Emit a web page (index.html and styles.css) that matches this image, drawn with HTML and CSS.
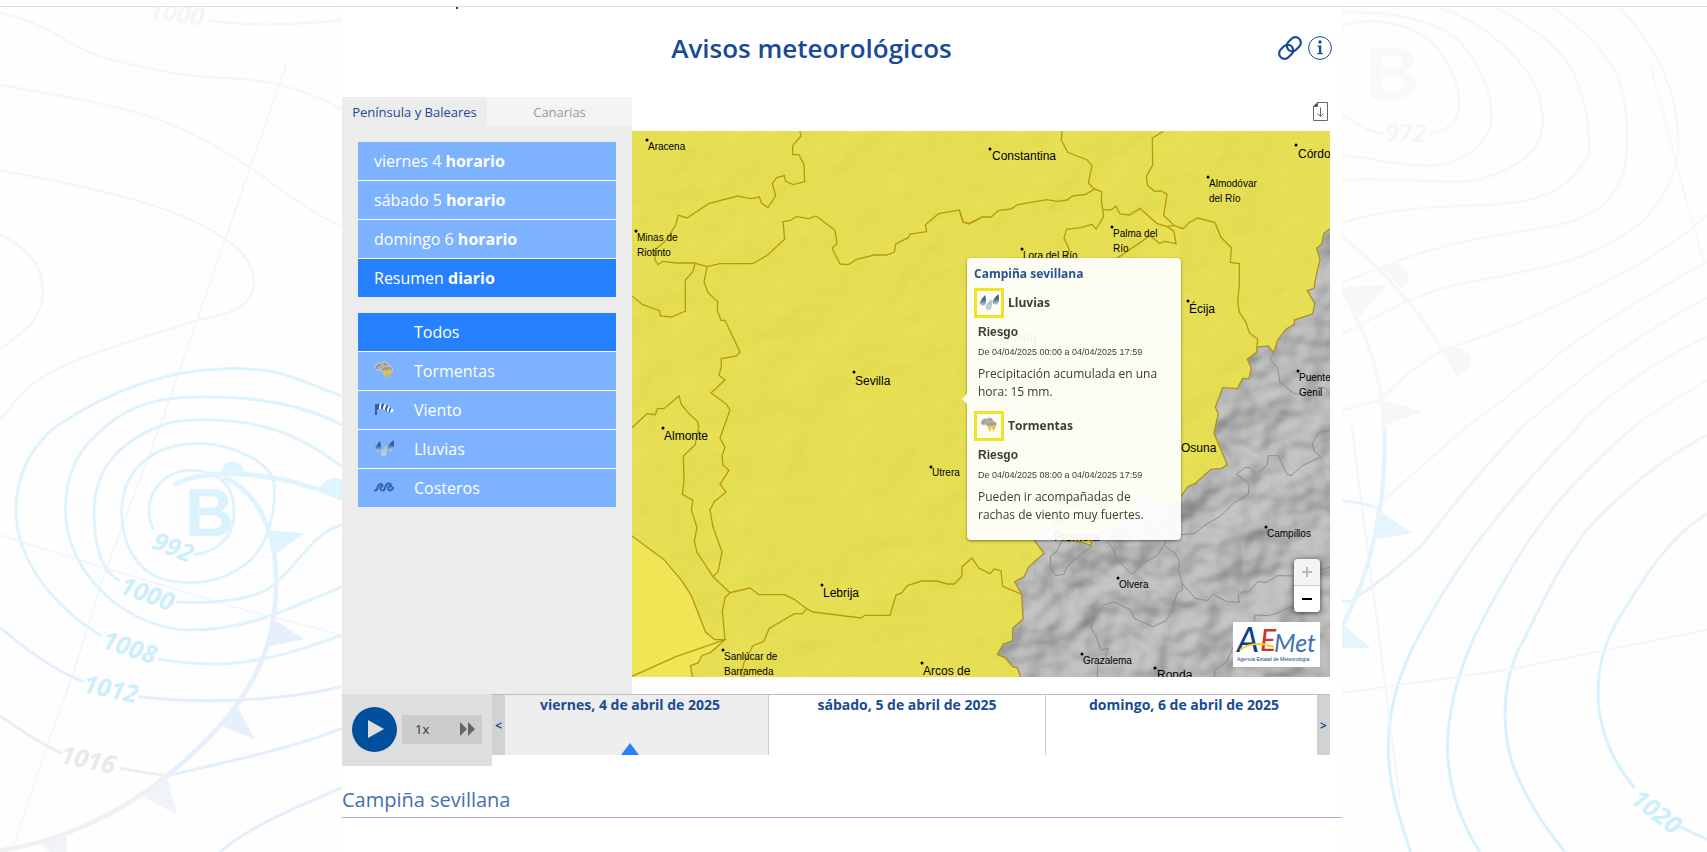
FILE: index.html
```html
<!DOCTYPE html>
<html lang="es">
<head>
    <meta charset="UTF-8">
    <meta name="viewport" content="width=device-width, initial-scale=1.0">
    <title>Avisos meteorológicos</title>
    <link rel="stylesheet" href="styles.css">
</head>
<body>
    <!-- isobaras del fondo -->
    <svg class="fondo fondo-izq" viewBox="0 0 1026 2556" aria-hidden="true">
        <g fill="none" stroke="#f6f6f6" stroke-width="7">
            <path d="M0 38C160 75 220 150 320 175S520 225 640 232S860 240 1026 328"/>
            <path d="M0 255C200 290 380 320 500 368S700 470 760 510S900 620 1026 680"/>
            <path d="M630 62C760 80 900 74 1026 60"/>
        </g>
        <g fill="none" stroke="#f1f5fd" stroke-width="7">
            <path d="M0 512C200 545 420 600 500 630S760 735 762 840S640 945 590 962S350 1030 220 1085S60 1180 0 1262"/>
            <path d="M0 703C80 745 130 790 128 880S60 1000 0 1048"/>
            <path d="M860 190L480 1278L310 1730L220 2020L140 2240L40 2540" stroke-width="5"/>
            <path d="M0 1605L300 1700L700 1820L1026 1905" stroke-width="5"/>
        </g>
        <g fill="none" stroke="#dff3fd" stroke-width="9">
            <path d="M170 1278C330 1170 500 1110 680 1106S900 1145 1026 1188"/>
            <path d="M170 1278C90 1340 48 1430 48 1530C48 1680 160 1820 305 1908M475 1978C640 2005 780 2000 1026 1905"/>
            <path d="M318 1278C230 1350 198 1420 196 1530C200 1740 400 1890 570 1890C740 1890 860 1830 1026 1760"/>
            <path d="M318 1278C400 1210 480 1190 620 1190S900 1210 1026 1275"/>
            <path d="M480 1278C540 1250 700 1255 790 1280C880 1300 960 1350 1026 1400"/>
            <path d="M480 1278C350 1330 282 1410 282 1540C284 1650 310 1720 360 1742M530 1806C640 1812 740 1800 800 1770C900 1700 930 1600 1026 1575"/>
            <path d="M740 1690C650 1760 550 1755 480 1735C400 1700 368 1630 365 1540C365 1390 480 1330 600 1330C720 1335 820 1400 822 1450Q828 1520 808 1578Q790 1650 740 1690"/>
            <path d="M460 1590C420 1500 480 1412 570 1410C650 1412 705 1450 702 1540C700 1620 640 1660 580 1664"/>
        </g>
        <g fill="none" stroke="#e4effd" stroke-width="9">
            <path d="M0 1882C80 1950 160 2010 250 2045M415 2090C600 2110 800 2110 1026 2060"/>
            <path d="M500 2328C680 2285 860 2250 1026 2185"/>
            <path d="M660 2556C760 2470 900 2420 1026 2362"/>
        </g>
        <path fill="none" stroke="#eeeeee" stroke-width="9" d="M0 2148C60 2190 120 2230 185 2260M360 2305L500 2328"/>
        <!-- frentes -->
        <path fill="none" stroke="#def4fe" stroke-width="14" d="M522 1455C600 1410 800 1400 1026 1495M670 1430C780 1480 830 1600 828 1750"/>
        <path fill="none" stroke="#e6effd" stroke-width="14" d="M828 1750C830 1980 720 2150 500 2328"/>
        <path fill="none" stroke="#f0f0f0" stroke-width="14" d="M500 2328C360 2440 200 2520 0 2552"/>
        <g fill="#def4fe">
            <path d="M662 1422A36 36 0 0 1 735 1422Z"/>
            <path d="M955 1465Q990 1420 1026 1440V1500Z"/>
            <path d="M800 1590L915 1600L822 1665Z"/>
        </g>
        <path fill="#e6effd" d="M822 1858L912 1918L800 1940ZM712 2120L765 2218L660 2175Z"/>
        <path fill="#f0f3f8" d="M500 2328L532 2445L430 2390ZM200 2508V2556H150L120 2532Z"/>
        <text class="borrasca" x="555" y="1608">B</text>
        <g class="cifras">
            <text class="celeste" transform="translate(452 1643) rotate(22)">992</text>
            <text class="celeste" transform="translate(355 1778) rotate(20)">1000</text>
            <text class="celeste" transform="translate(302 1942) rotate(18)">1008</text>
            <text class="celeste" transform="translate(246 2076) rotate(12)">1012</text>
            <text class="gris" transform="translate(178 2288) rotate(12)">1016</text>
            <text class="claro" transform="translate(445 55) rotate(8)">1000</text>
        </g>
    </svg>
    <svg class="fondo fondo-der" viewBox="0 0 1101 2556" aria-hidden="true">
        <g fill="none" stroke="#f7f7f7" stroke-width="8">
            <path d="M0 78C120 45 210 75 280 130C340 200 370 290 352 345C335 385 300 395 265 402M130 400C80 395 30 360 0 335"/>
            <path d="M0 38C160 30 270 60 350 115C430 200 465 300 452 380C400 490 300 500 250 497C160 495 100 475 0 463"/>
            <path d="M300 25C420 60 500 140 560 210C620 300 620 400 580 450C500 530 400 550 300 545C200 540 100 535 0 540"/>
            <path d="M470 25C620 100 690 180 710 240C750 350 750 420 745 465C680 590 560 610 440 615C280 620 140 625 0 670"/>
            <path d="M640 25C740 90 800 170 830 220C870 330 865 450 850 520C810 640 700 670 600 685C400 715 250 750 170 785L0 850"/>
            <path d="M840 25C960 150 1015 290 1015 420C1015 530 970 600 900 670C760 780 620 800 480 830C350 850 280 870 200 905L0 1005"/>
            <path d="M1101 645C980 760 760 870 640 920C520 980 430 1010 310 1050C220 1100 170 1150 120 1200L0 1232"/>
            <path d="M1101 785C900 900 760 980 660 1060C560 1150 450 1230 380 1280L120 1510"/>
            <path d="M1101 893C900 1000 760 1100 550 1278"/>
            <path d="M1101 1010C950 1080 820 1170 710 1278"/>
            <path d="M1101 1140C1040 1180 960 1220 885 1278"/>
            <path d="M930 190L1030 570L1090 780" stroke-width="5"/>
        </g>
        <g fill="none" stroke="url(#isobara)" stroke-width="9">
            <path d="M550 1278C440 1390 350 1500 250 1630C180 1700 100 1760 30 1805"/>
            <path d="M718 1278C560 1440 430 1590 340 1730C220 1920 145 2060 145 2240C145 2360 180 2460 212 2556"/>
            <path d="M885 1278C720 1420 600 1550 500 1730C380 1930 325 2080 322 2240C325 2380 370 2480 420 2556"/>
            <path d="M1101 1305C960 1380 840 1480 740 1590C640 1720 590 1850 530 1960C480 2080 490 2210 520 2300C560 2400 620 2490 675 2556"/>
            <path d="M1101 1540C980 1620 920 1720 840 1850C790 1930 770 2010 775 2110C785 2220 830 2300 885 2365M1020 2480L1101 2518"/>
        </g>
        <path fill="none" stroke="#f1f6f9" stroke-width="6" d="M0 2080L500 2010L1101 1890M35 1278L100 1780L180 2400"/>
        <path fill="none" stroke="#f7f7f7" stroke-width="12" d="M0 705C150 820 260 960 355 1125M0 860C90 1010 130 1150 133 1290"/>
        <path fill="none" stroke="#e4f4fd" stroke-width="13" d="M133 1290C140 1520 90 1730 0 1890"/>
        <path fill="none" stroke="#e4f4fd" stroke-width="9" d="M0 1502Q60 1505 118 1525M0 1800L40 1808"/>
        <path fill="#f7f7f7" d="M125 800C160 780 215 790 205 850L185 865ZM0 862L140 855L60 950ZM312 1040C360 1030 410 1060 390 1105L355 1128ZM125 1198L248 1236L125 1278Z"/>
        <path fill="#e6f4fd" d="M110 1528L216 1600L100 1618ZM0 1865L92 1945H0Z"/>
        <text class="borrasca tenue" x="78" y="296">B</text>
        <g class="cifras">
            <text class="claro" x="135" y="425">972</text>
            <text class="celeste" transform="translate(868 2405) rotate(38)">1020</text>
        </g>
        <defs>
            <linearGradient id="isobara" gradientUnits="userSpaceOnUse" x1="0" y1="1278" x2="0" y2="2100">
                <stop offset="0" stop-color="#f4f4f6"/>
                <stop offset="1" stop-color="#d6f2fd"/>
            </linearGradient>
        </defs>
    </svg>

    <div class="contenedor">
        <header class="cabecera">
            <h1>Avisos meteorológicos</h1>
            <a href="#enlace" class="icono-cab" aria-label="Enlace">
                <svg width="24" height="24" viewBox="1 1 22 22" fill="none" stroke="#1a4a94" stroke-width="2" stroke-linecap="round">
                    <path d="M10 13a5 5 0 0 0 7.540.540l3-3a5 5 0 0 0-7.070-7.070l-3.200 3.200Q8 9 10 13"/>
                    <path d="M14 11a5 5 0 0 0-7.540-.540l-3 3a5 5 0 0 0 7.070 7.070l3.200-3.200Q16 15 14 11"/>
                </svg>
            </a>
            <a href="#info" class="icono-cab" aria-label="Información">
                <svg width="24" height="24" viewBox="0 0 24 24">
                    <circle cx="12" cy="12" r="11.400" fill="#fff" stroke="#1a4a94"/>
                    <circle cx="12" cy="6" r="1.700" fill="#1a4a94"/>
                    <path d="M9.500 9.500H13.300V17H14.800V18.200H9.400V17H10.900V10.700H9.500Z" fill="#1a4a94"/>
                </svg>
            </a>
        </header>

        <div class="visor">
            <div class="superior">
                <aside class="lateral">
                    <div class="pestanas">
                        <button type="button" class="pestana activa">Península y Baleares</button>
                        <button type="button" class="pestana">Canarias</button>
                    </div>
                    <ul class="menu">
                        <li><a href="#d4">viernes 4 <b>horario</b></a></li>
                        <li><a href="#d5">sábado 5 <b>horario</b></a></li>
                        <li><a href="#d6">domingo 6 <b>horario</b></a></li>
                        <li><a href="#resumen" class="activo">Resumen <b>diario</b></a></li>
                    </ul>
                    <ul class="menu fenomenos">
                        <li><a href="#todos" class="activo"><span class="icono"></span>Todos</a></li>
                        <li><a href="#tormentas"><span class="icono"><svg width="20" height="20" viewBox="0 0 20 20"><use href="#i-tormenta"/></svg></span>Tormentas</a></li>
                        <li><a href="#viento"><span class="icono"><svg width="20" height="20" viewBox="0 0 20 20">
                            <path d="M1 4H3V15H1Z" fill="#2d5fae"/>
                            <path d="M3 4.500L6 3.500L12 4.500L18.500 8.500A2.200 2.200 0 0 1 17 12.500L13 11.500L8 8.500L3 9Z" fill="#fff"/>
                            <path d="M3 4L6 3.500Q4.800 6 5 9L3 9.500ZM8 3.500L10.500 4Q8.800 6.500 9 9.500L7 8.500Q6.500 6 8 3.500ZM12.500 4.800L14.500 6Q12.800 8.500 13 11.500L11 10.500Q11 7.500 12.500 4.800ZM16 7L17.500 8Q16.200 10 16 12.500L14.500 12Q14.700 9 16 7Z" fill="#2d5fae"/>
                        </svg></span>Viento</a></li>
                        <li><a href="#lluvias"><span class="icono"><svg width="20" height="20" viewBox="0 0 20 20"><use href="#i-lluvia"/></svg></span>Lluvias</a></li>
                        <li><a href="#costeros"><span class="icono"><svg width="20" height="20" viewBox="0 0 20 20" fill="none" stroke="#2f66b4" stroke-width="2" stroke-linecap="round" stroke-linejoin="round">
                            <path d="M1 12.500Q3 12.500 3.500 10Q4 6 7 6Q9 6.500 8.500 8.500Q7 7.800 6.300 9.500Q6.200 12.500 8.500 12.500Q10.500 12.500 11 10Q12 5.500 15 5.500Q17.500 6 17 8.500Q15 7.500 14.300 9.500Q14 12.500 16 12.500Q18.500 12 19 9.500"/>
                        </svg></span>Costeros</a></li>
                    </ul>
                </aside>

                <section class="zona-mapa">
                    <div class="barra-mapa">
                        <a href="#descarga" aria-label="Descargar mapa">
                            <svg width="15" height="19" viewBox="0 0 15 19" fill="none" stroke="#666">
                                <path d="M4.500 .500H14.500V18.500H.500V4.500Z"/>
                                <path d="M.500 4.500L4.500 .500V4.500Z" fill="#4a4a4a"/>
                                <path d="M7.500 5.500V14M4.500 11.500L7.500 14.500L10.500 11.500"/>
                            </svg>
                        </a>
                    </div>
                    <div class="mapa">
                        <svg class="capa" viewBox="0 0 2094 1638" preserveAspectRatio="xMinYMin slice" aria-hidden="true">
                            <defs>
                                <filter id="relieve" x="0" y="0" width="1" height="1" color-interpolation-filters="sRGB">
                                    <feTurbulence type="fractalNoise" baseFrequency=".006 .007" numOctaves="3" seed="8"/>
                                    <feDiffuseLighting surfaceScale="32" lighting-color="#d2d2d2">
                                        <feDistantLight azimuth="225" elevation="62"/>
                                    </feDiffuseLighting>
                                </filter>
                            </defs>
                            <rect width="2094" height="1638" fill="#b7b7b7"/>
                            <rect width="2094" height="1638" filter="url(#relieve)" opacity=".55"/>
                            <!-- límites en zona sin aviso -->
                            <g class="limites-gris" transform="translate(984 -33)">
                                <path d="M942 698L930 717L953 745L960 788L1003 821L1030 823L1045 805L1060 818L1075 802L1095 803L1110 822"/>
                                <path d="M1110 933L1078 937L1057 970L1062 993L1083 1011L1027 1037L993 1067L980 1062L955 1007L925 1007L922 1035L886 1066L870 1042L855 1043L829 1062L868 1092L865 1123L820 1150L780 1190L735 1215L704 1240L663 1244"/>
                                <path d="M440 1262L462 1290L470 1315L512 1361L522 1359L545 1332L590 1308L612 1275L625 1245L663 1244"/>
                                <path d="M612 1275L645 1300L658 1322L655 1350L667 1390L706 1435L741 1442L758 1423L800 1445L838 1447L835 1425L850 1415L865 1417L893 1385L920 1387L953 1367L1000 1368L1110 1342"/>
                                <path d="M667 1390L667 1410L650 1420L640 1465L618 1502L580 1520L522 1495L513 1470L462 1446L430 1455L398 1500L394 1525L408 1548L423 1590L445 1585L437 1610L413 1635L412 1671"/>
                                <path d="M397 1276L345 1318L319 1343L313 1363L286 1367L270 1335L272 1308L290 1295L305 1262"/>
                                <path d="M1003 1465L988 1462L950 1480L925 1487L886 1485L882 1505L850 1540L820 1580L800 1625L765 1650L762 1671"/>
                            </g>
                            <!-- zona con aviso amarillo -->
                            <path class="aviso" transform="translate(984 -33)" d="M-990 30H1115V323L1092 340L1085 372L1070 385L1080 418L1070 460L1062 505L1042 512L1064 550L1058 582L1003 600V613L978 628L953 660L942 698L925 678L891 681L890 697L862 718L874 745L867 776L848 775L832 806L788 803L766 862L775 880L762 940L802 1034L786 1045L753 1048L706 1090L683 1100L663 1130L640 1155L585 1165L530 1115L526 1190L470 1220L440 1225L397 1262L391 1276L370 1268L345 1263H315L290 1218L210 1235L222 1260L252 1300L205 1342L193 1370L164 1385L185 1423L189 1497L158 1525V1562L130 1572L112 1603L135 1613L158 1640L172 1643L183 1675H-990Z"/>
                            <path class="mar" transform="translate(-6 -33)" d="M0 1246L102 1319L155 1382L184 1427L227 1537L254 1559H285L242 1597L215 1607L205 1628L181 1638L188 1675H0Z"/>
                            <g class="limites" transform="translate(-6 -33)">
                                <path d="M510 33L513 48L488 77V104H507L522 135L524 185L489 194L467 183L463 167L440 173L427 190L437 228L414 263L395 250L388 231L361 236L323 228L236 251L171 294L145 285L137 315L108 361L75 390V420L84 434L98 424L138 429H193L231 440L270 431H368L410 407L464 358L459 305L482 301L498 290L537 296L558 288L615 331L621 371L606 384L630 432L655 434L680 418L733 405H770L793 396L797 372L835 353L840 342L890 335L886 314L926 281L988 270L999 306L1017 311L1050 295"/>
                                <path d="M195 430L189 454L166 480V573L124 591L91 588L89 572L38 554L6 528"/>
                                <path d="M231 440L222 486L234 518L263 545L262 572L273 601H285L330 696L320 708L274 716V738L267 766L285 780L243 819L288 851L300 870L270 954L285 982L276 1008L279 1035L297 1051L270 1093L288 1116L252 1146L240 1170L249 1221L276 1296L264 1356L249 1370L300 1418L360 1404L387 1424H463L493 1438L530 1466L549 1476L693 1494L704 1486H780L798 1425L815 1419L832 1397L875 1383H920L953 1392H973L996 1368V1340L1026 1314L1047 1345L1080 1361L1093 1347L1113 1352L1118 1399L1175 1423"/>
                                <path d="M6 923L51 881L76 884L82 866H102L147 828L154 853L176 880L202 903L206 922L195 975L160 1008L162 1083L157 1123L189 1141L184 1170L201 1223L193 1263L201 1297L249 1370"/>
                                <path d="M300 1418L285 1433L277 1475L285 1559M530 1466L517 1481H493L417 1526L402 1563L368 1578L342 1628L333 1665L345 1670"/>
                                <path d="M6 1669L138 1610L285 1559M6 1248L102 1319L155 1382L184 1427L227 1537L254 1559H285L242 1597L215 1607L205 1628L181 1638L188 1675"/>
                            </g>
                            <g class="limites" transform="translate(984 -33)">
                                <path d="M0 275L9 306L27 311L67 291H94L114 272L153 267L173 254L261 239L291 244L321 240L337 228L377 223L403 207L385 189L396 137L382 120L323 97L304 60L306 33"/>
                                <path d="M403 207L425 215L424 242L431 290L408 327L396 313L363 323L320 328L312 353L328 390L310 420L350 455L375 475L395 470L410 445L475 412L570 347L598 370L614 364L648 371L642 334L622 320L590 310L540 265L508 285L480 282L468 259L452 270L428 268"/>
                                <path d="M610 34L577 54L578 135L559 170L563 197L584 214L604 213L621 223L611 286L642 316L622 320M642 316L669 326L687 308L713 294L765 308L783 352L814 383L811 427L838 431V495L833 545L838 577L857 605L868 638L893 658L891 681"/>
                            </g>
                        </svg>
                        <svg class="capa poblaciones" viewBox="0 0 698 546" preserveAspectRatio="xMinYMin slice">
                            <g class="puntos">
                                <circle cx="15" cy="9" r="1.500"/><circle cx="4" cy="100" r="1.500"/><circle cx="222" cy="241" r="1.500"/>
                                <circle cx="31" cy="297" r="1.500"/><circle cx="299" cy="336" r="1.500"/><circle cx="190" cy="454" r="1.500"/>
                                <circle cx="91" cy="519" r="1.500"/><circle cx="290" cy="532" r="1.500"/><circle cx="358" cy="18" r="1.500"/>
                                <circle cx="664" cy="14" r="1.500"/><circle cx="576" cy="46" r="1.500"/><circle cx="480" cy="96" r="1.500"/>
                                <circle cx="390" cy="118" r="1.500"/><circle cx="556" cy="170" r="1.500"/><circle cx="666" cy="240" r="1.500"/>
                                <circle cx="547" cy="309" r="1.500"/><circle cx="634" cy="396" r="1.500"/><circle cx="486" cy="447" r="1.500"/>
                                <circle cx="450" cy="523" r="1.500"/><circle cx="523" cy="537" r="1.500"/>
                            </g>
                            <g class="pueblo">
                                <text x="16" y="19">Aracena</text>
                                <text x="5" y="110">Minas de<tspan x="5" dy="15">Riotinto</tspan></text>
                                <text x="300" y="345">Utrera</text>
                                <text x="92" y="529">Sanlúcar de<tspan x="92" dy="15">Barrameda</tspan></text>
                                <text x="577" y="56">Almodóvar<tspan x="577" dy="15">del Río</tspan></text>
                                <text x="481" y="106">Palma del<tspan x="481" dy="15">Río</tspan></text>
                                <text x="391" y="128">Lora del Río</text>
                                <text x="667" y="250">Puente<tspan x="667" dy="15">Genil</tspan></text>
                                <text x="635" y="406">Campillos</text>
                                <text x="487" y="457">Olvera</text>
                                <text x="451" y="533">Grazalema</text>
                            </g>
                            <g class="ciudad">
                                <text x="223" y="254">Sevilla</text>
                                <text x="32" y="309">Almonte</text>
                                <text x="191" y="466">Lebrija</text>
                                <text x="291" y="544">Arcos de</text>
                                <text x="360" y="29">Constantina</text>
                                <text x="666" y="27">Córdoba</text>
                                <text x="557" y="182">Écija</text>
                                <text x="355" y="211">Carmona</text>
                                <text x="549" y="321">Osuna</text>
                                <text x="422" y="374">Morón de<tspan x="422" dy="18">la</tspan><tspan x="422" dy="18">Frontera</tspan></text>
                                <text x="525" y="548">Ronda</text>
                            </g>
                        </svg>

                        <div class="globo">
                            <h2>Campiña sevillana</h2>
                            <article class="aviso-item">
                                <h3><span class="marco"><svg width="20" height="20" viewBox="0 0 20 20"><use href="#i-lluvia"/></svg></span>Lluvias</h3>
                                <p class="nivel">Riesgo</p>
                                <p class="fechas">De 04/04/2025 00:00 a 04/04/2025 17:59</p>
                                <p class="texto">Precipitación acumulada en una hora: 15 mm.</p>
                            </article>
                            <article class="aviso-item">
                                <h3><span class="marco"><svg width="18" height="18" viewBox="0 0 20 20"><use href="#i-tormenta"/></svg></span>Tormentas</h3>
                                <p class="nivel">Riesgo</p>
                                <p class="fechas">De 04/04/2025 08:00 a 04/04/2025 17:59</p>
                                <p class="texto">Pueden ir acompañadas de rachas de viento muy fuertes.</p>
                            </article>
                        </div>

                        <div class="controles">
                            <div class="zoom">
                                <button type="button" aria-label="Acercar" disabled><svg width="10" height="10"><path d="M0 4H4V0H6V4H10V6H6V10H4V6H0Z" fill="#bbb"/></svg></button>
                                <button type="button" aria-label="Alejar"><svg width="10" height="10"><path d="M0 4H10V6H0Z" fill="#000"/></svg></button>
                            </div>
                            <svg class="logo" width="87" height="45" viewBox="0 0 87 45" role="img" aria-label="AEMET">
                                <rect width="87" height="45" fill="#fff"/>
                                <text class="letra" x="4" y="30" font-size="35" fill="#0b3d91">A</text>
                                <text class="letra" x="27" y="29" font-size="30" fill="#c8372d">E</text>
                                <text class="letra" x="41" y="30" font-size="25" fill="#3f72b5">Met</text>
                                <path d="M7 28Q20 18 41 25" fill="none" stroke="#f6d21f" stroke-width="2"/>
                                <text x="4" y="39" class="lema">Agencia Estatal de Meteorología</text>
                            </svg>
                        </div>
                    </div>
                </section>
            </div>

            <div class="reproductor">
                <div class="mandos">
                    <button type="button" class="play" aria-label="Reproducir">
                        <svg width="16" height="18" viewBox="0 0 16 18"><path d="M0 0L16 9L0 18Z" fill="#dfdfdf"/></svg>
                    </button>
                    <button type="button" class="velocidad">1x
                        <svg width="16" height="14" viewBox="0 0 16 14"><path d="M0 0L7 7L0 14ZM8 0L15 7L8 14Z" fill="#666"/></svg>
                    </button>
                </div>
                <div class="linea">
                    <button type="button" class="paso previo" aria-label="Anterior">&lt;</button>
                    <ol class="dias">
                        <li class="actual">viernes, 4 de abril de 2025
                            <svg width="18" height="12" viewBox="0 0 18 12"><path d="M0 12L9 0L18 12Z" fill="#2a82ff"/></svg>
                        </li>
                        <li>sábado, 5 de abril de 2025</li>
                        <li>domingo, 6 de abril de 2025</li>
                    </ol>
                    <button type="button" class="paso siguiente" aria-label="Siguiente">&gt;</button>
                </div>
            </div>
        </div>

        <h2 class="zona">Campiña sevillana</h2>
    </div>

    <svg class="simbolos" aria-hidden="true">
        <defs>
            <linearGradient id="gota1" x1="0" y1="0" x2="0" y2="1"><stop offset=".4" stop-color="#33598f"/><stop offset="1" stop-color="#c3d4dd"/></linearGradient>
            <linearGradient id="gota2" x1="0" y1="0" x2="0" y2="1"><stop offset="0" stop-color="#a3c2cd"/><stop offset="1" stop-color="#b9d6da"/></linearGradient>
        </defs>
        <symbol id="i-lluvia" viewBox="0 0 20 20">
            <path d="M6 2Q8 9 6 12Q3 14 1 11Q0 9 6 2Z" fill="url(#gota1)"/>
            <path d="M19.500 1Q21 8 18.500 11Q15 13 13.500 10Q13 7 19.500 1Z" fill="url(#gota1)"/>
            <path d="M12.500 6Q14 13 11.500 16.500Q8 18 6.500 15Q6 12 12.500 6Z" fill="url(#gota2)"/>
        </symbol>
        <symbol id="i-tormenta" viewBox="0 0 20 20">
            <path d="M3 9Q-.500 7 2 4Q4 1 7.500 2Q10 0 13 1.500Q15 3 14.500 4.500Q18 4.500 18.500 8Q18.500 11 15.500 11H10Q7.500 11 7 9Z" fill="#999" stroke="#ddd" stroke-width=".800"/>
            <path d="M5 8.500Q6 3.500 10 3.500M7 9Q8 5 12 5Q14 5 14.500 6.500" fill="none" stroke="#ddd" stroke-width=".800"/>
            <path d="M9.500 9H12.500L12 12H13L10.500 18V14H9ZM14 8.500H17L16.500 11.500H17.500L14.500 17V13H13Z" fill="#f0c22a"/>
        </symbol>
    </svg>
</body>
</html>
```
FILE: styles.css
```css
* {
    box-sizing: border-box;
    margin: 0;
    padding: 0;
}

body {
    position: relative;
    min-height: 100vh;
    overflow-x: hidden;
    font-family: "Open Sans", sans-serif;
    font-size: 16px;
    color: #333;
    background-color: #fefefe;
    border-top: 6px solid #fff;
    padding-right: 23px;
}

ul, ol {
    list-style: none;
}

a {
    color: inherit;
    text-decoration: none;
}

button {
    font-family: inherit;
    border: none;
    cursor: pointer;
}

svg {
    display: block;
}

.simbolos {
    position: absolute;
    width: 0;
    height: 0;
}

/* fondo */
.fondo {
    position: absolute;
    top: -6px;
    z-index: -1;
}

.fondo-izq {
    left: 0;
    width: 342px;
}

.fondo-der {
    right: 0;
    width: 367px;
}

.borrasca {
    font-family: "Liberation Sans", sans-serif;
    font-weight: bold;
    font-size: 204px;
    fill: #d9f2fe;
}

.borrasca.tenue {
    font-size: 222px;
    fill: #f9f9f9;
}

.cifras {
    font-weight: bold;
    font-style: italic;
    font-size: 75px;
}

.celeste { fill: #cdeffc; }
.gris { fill: #e9e9e9; }
.claro { fill: #f6f6f6; }

.contenedor {
    position: relative;
    max-width: 1000px;
    min-height: calc(100vh - 7px);
    margin: 0 auto;
    background-color: #fff;
}

/* marca sobre la linea superior */
.contenedor::before {
    content: "";
    position: absolute;
    top: 0;
    left: 114px;
    width: 2px;
    height: 2px;
    background-color: #444;
}

body::before {
    content: "";
    display: block;
    height: 1px;
    margin-right: -23px;
    background-color: #ddd;
}

/* cabecera */
.cabecera {
    display: flex;
    align-items: center;
    gap: 6px;
    height: 82px;
    padding: 0 10px 0 9px;
}

.cabecera h1 {
    flex: 1;
    text-align: center;
    font-size: 26px;
    font-weight: 600;
    color: #1a4a94;
}

.visor {
    max-width: 988px;
    margin-top: 8px;
}

.superior {
    display: flex;
}

/* menu lateral */
.lateral {
    width: 290px;
    flex-shrink: 0;
    background-color: #ececec;
}

.pestanas {
    display: flex;
    margin-bottom: 16px;
}

.pestana {
    flex: 1;
    height: 29px;
    font-size: 13px;
    white-space: nowrap;
    color: #999;
    background-color: #f4f4f4;
}

.pestana.activa {
    color: #1a4a94;
    background-color: #ececec;
}

.menu {
    display: flex;
    flex-direction: column;
    gap: 1px;
    margin: 0 16px 16px;
    background-color: #fff;
}

.menu a {
    display: flex;
    align-items: center;
    height: 38px;
    padding: 0 16px;
    color: #fff;
    background-color: #7db2ff;
    white-space: pre;
}

.menu a.activo {
    background-color: #2681ff;
}

.menu b {
    font-weight: bold;
}

.icono {
    width: 40px;
}

/* mapa */
.zona-mapa {
    flex: 1;
    min-width: 0;
    padding-bottom: 17px;
}

.barra-mapa {
    display: flex;
    justify-content: flex-end;
    align-items: center;
    height: 34px;
    padding: 0 2px 6px;
}

.mapa {
    position: relative;
    height: 546px;
    overflow: hidden;
    background-color: #b5b5b5;
}

.capa {
    position: absolute;
    top: 0;
    left: 0;
    width: 100%;
    height: 100%;
}

.aviso {
    fill: #ebe248;
    fill-opacity: .91;
    stroke: #a8942a;
    stroke-width: 4;
}

.mar {
    fill: #efe555;
}

.limites, .limites-gris {
    fill: none;
    stroke: #b89a12;
    stroke-width: 4;
}

.limites-gris {
    stroke: #8c8c8c;
    stroke-width: 3;
}

.poblaciones {
    font-family: "Liberation Sans", Arial, sans-serif;
    fill: #000;
}

.pueblo {
    font-size: 10px;
}

.ciudad {
    font-size: 12px;
}

/* globo de aviso */
.globo {
    position: absolute;
    left: 335px;
    top: 127px;
    width: 214px;
    padding: 7px 7px 16px;
    border-radius: 4px;
    background-color: #fff;
    box-shadow: 0 1px 3px rgba(0,0,0,0.5);
    opacity: .94;
    font-size: 12px;
    line-height: 18px;
}

.globo::before {
    content: "";
    position: absolute;
    left: -5px;
    top: 136px;
    border: 5px solid transparent;
    border-left: none;
    border-right-color: #fff;
}

.globo h2 {
    font-size: 12px;
    color: #1a4a94;
    margin-bottom: 5px;
}

.aviso-item + .aviso-item {
    margin-top: 10px;
}

.globo h3 {
    display: flex;
    align-items: center;
    gap: 4px;
    font-size: 12px;
    margin-bottom: 5px;
}

.marco {
    display: flex;
    align-items: center;
    justify-content: center;
    width: 30px;
    height: 30px;
    border: 3px solid #f2e321;
}

.globo p {
    padding-left: 4px;
}

.globo .texto {
    padding-right: 16px;
}

.nivel, .fechas {
    font-family: "Liberation Sans", Arial, sans-serif;
}

.nivel {
    font-weight: bold;
    margin-bottom: 2px;
}

.fechas {
    font-size: 9px;
    margin-bottom: 4px;
}

.controles {
    position: absolute;
    right: 10px;
    bottom: 10px;
    display: flex;
    flex-direction: column;
    align-items: flex-end;
    gap: 10px;
}

.zoom {
    border-radius: 4px;
    overflow: hidden;
    box-shadow: 0 1px 5px rgba(0,0,0,0.65);
}

.zoom button {
    display: flex;
    align-items: center;
    justify-content: center;
    width: 26px;
    height: 26px;
    background-color: #fff;
}

.zoom button:disabled {
    height: 27px;
    background-color: #f4f4f4;
    border-bottom: 1px solid #ccc;
}

.letra {
    font-family: Lato, sans-serif;
    font-style: italic;
}

.lema {
    font-family: "Liberation Sans", sans-serif;
    font-size: 5px;
    fill: #0b3d91;
}

/* reproductor */
.reproductor {
    display: flex;
    align-items: flex-start;
}

.mandos {
    display: flex;
    align-items: center;
    gap: 5px;
    width: 150px;
    height: 72px;
    padding: 0 10px 2px;
    background-color: #dfdfdf;
}

.play {
    display: flex;
    align-items: center;
    justify-content: center;
    flex-shrink: 0;
    width: 45px;
    height: 45px;
    padding-left: 2px;
    border-radius: 50%;
    background-color: #00509d;
}

.velocidad {
    display: flex;
    align-items: center;
    justify-content: space-between;
    flex: 1;
    height: 29px;
    padding: 0 6px 0 13px;
    font-size: 13px;
    color: #333;
    background-color: #ccc;
}

.linea {
    position: relative;
    flex: 1;
    height: 61px;
    padding-right: 8px;
    border-top: 1px solid #bbb;
}

.dias {
    display: flex;
    height: 100%;
}

.dias li {
    display: flex;
    flex-direction: column;
    align-items: center;
    justify-content: space-between;
    flex: 1;
    font-size: 14px;
    line-height: 20px;
    font-weight: bold;
    color: #1a4a94;
    border-right: 1px solid #ccc;
}

.dias li:last-child {
    border-right: none;
}

.dias .actual {
    background-color: #eee;
}

.paso {
    position: absolute;
    top: 0;
    width: 13px;
    height: 60px;
    font-size: 12px;
    font-weight: bold;
    color: #1a4a94;
    background-color: #d2d2d2;
}

.previo { left: 0; }
.siguiente { right: 0; }

.zona {
    margin-top: 19px;
    padding-bottom: 2px;
    font-size: 20px;
    line-height: 30px;
    font-weight: normal;
    color: #456fb1;
    border-bottom: 1px solid #a3b7d8;
}
```
